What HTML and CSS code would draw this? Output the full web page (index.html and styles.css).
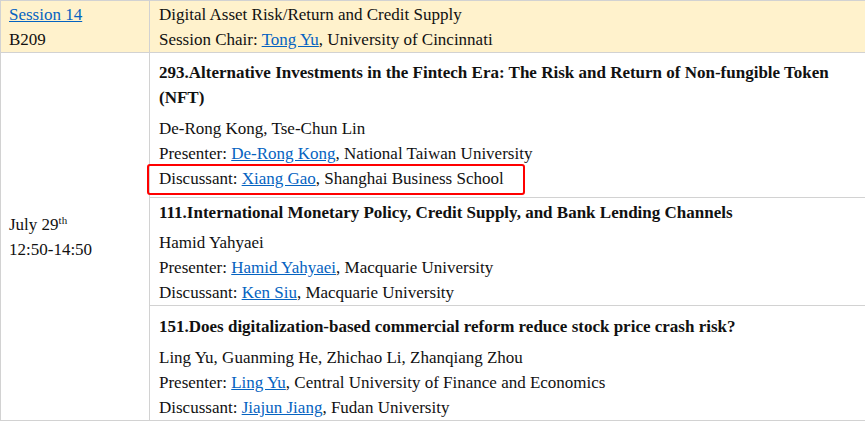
FILE: index.html
```html
<!DOCTYPE html>
<html lang="en">

<head>
    <meta charset="UTF-8">
    <meta name="viewport" content="width=device-width, initial-scale=1.0">
    <title>Session 14</title>
    <link rel="stylesheet" href="styles.css">
</head>

<body>
    <table class="schedule">
        <colgroup>
            <col class="col-side">
            <col class="col-main">
        </colgroup>
        <!-- 场次信息 -->
        <tr class="head">
            <td class="side">
                <div><a href="#">Session 14</a></div>
                <div>B209</div>
            </td>
            <td class="main">
                <div>Digital Asset Risk/Return and Credit Supply</div>
                <div>Session Chair: <a href="#">Tong Yu</a>, University of Cincinnati</div>
            </td>
        </tr>
        <!-- 论文列表 -->
        <tr>
            <td class="side time" rowspan="3">
                <div>July 29<sup>th</sup></div>
                <div>12:50-14:50</div>
            </td>
            <td class="paper first">
                <div class="title">293.Alternative Investments in the Fintech Era: The Risk and Return of Non-fungible Token (NFT)</div>
                <div>De-Rong Kong, Tse-Chun Lin</div>
                <div>Presenter: <a href="#">De-Rong Kong</a>, National Taiwan University</div>
                <div class="mark">Discussant: <a href="#">Xiang Gao</a>, Shanghai Business School</div>
            </td>
        </tr>
        <tr>
            <td class="paper second">
                <div class="title">111.International Monetary Policy, Credit Supply, and Bank Lending Channels</div>
                <div>Hamid Yahyaei</div>
                <div>Presenter: <a href="#">Hamid Yahyaei</a>, Macquarie University</div>
                <div>Discussant: <a href="#">Ken Siu</a>, Macquarie University</div>
            </td>
        </tr>
        <tr>
            <td class="paper third">
                <div class="title">151.Does digitalization-based commercial reform reduce stock price crash risk?</div>
                <div>Ling Yu, Guanming He, Zhichao Li, Zhanqiang Zhou</div>
                <div>Presenter: <a href="#">Ling Yu</a>, Central University of Finance and Economics</div>
                <div>Discussant: <a href="#">Jiajun Jiang</a>, Fudan University</div>
            </td>
        </tr>
    </table>
</body>

</html>
```

FILE: styles.css
```css
body {
    margin: 0;
    padding: 0;
    background: #fff;
    color: #111;
    font-family: "Liberation Serif", "Times New Roman", serif;
    font-size: 17px;
    line-height: 25px;
}

a {
    color: #0563c1;
    text-decoration: underline;
}

.schedule {
    width: 867px;
    border-collapse: collapse;
    table-layout: fixed;
}

.schedule .col-side {
    width: 149px;
}

.schedule td {
    border: 1px solid #d2d2d2;
    padding: 0 9px 0 9px;
    vertical-align: top;
}

.schedule .side {
    padding-left: 8px;
}

.schedule .head td {
    background: #fff2cc;
    padding-top: 1px;
    padding-bottom: 0;
}

.schedule .time {
    vertical-align: middle;
}

.schedule .time sup {
    font-size: 11px;
    line-height: 0;
    vertical-align: 6px;
}

.schedule .paper .title {
    font-weight: bold;
    margin-bottom: 6px;
}

.schedule .paper.first {
    padding-top: 7px;
    padding-bottom: 6px;
}

.schedule .paper.second {
    padding-top: 2px;
    padding-bottom: 0;
}

.schedule .paper.second .title {
    margin-bottom: 5px;
}

.schedule .paper.third {
    padding-top: 8px;
    padding-bottom: 0;
}

/* 红框标注 */
.mark {
    position: relative;
}

.mark::after {
    content: "";
    position: absolute;
    left: -12px;
    top: -2px;
    width: 374px;
    height: 27px;
    border: 2px solid #f00;
    border-radius: 3px;
}
```
